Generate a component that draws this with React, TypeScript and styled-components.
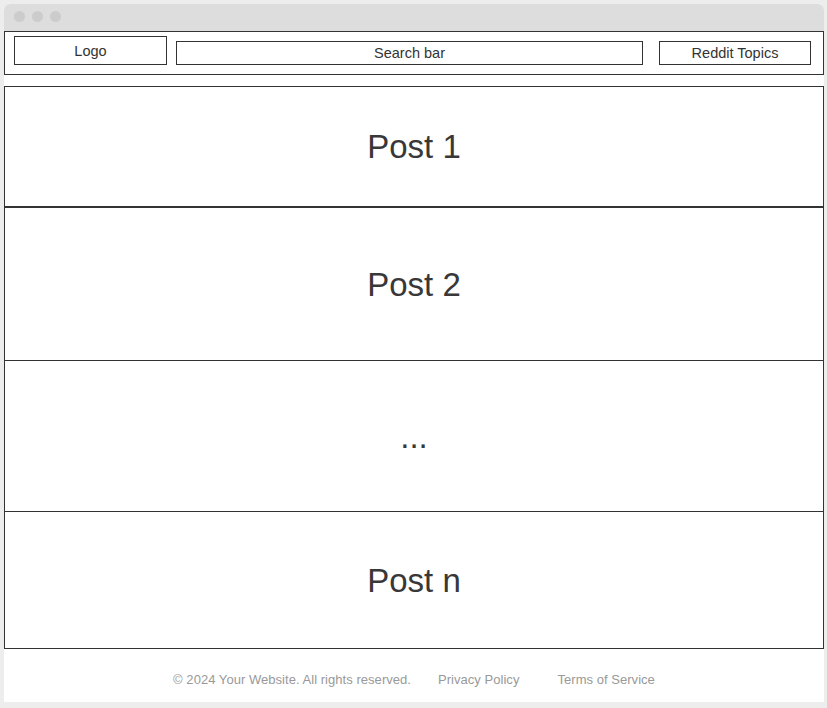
import React from "react";
import styled, { createGlobalStyle } from "styled-components";

const Global = createGlobalStyle`
  html, body { margin: 0; padding: 0; background: #ededed; }
  body { font-family: "Liberation Sans", Arial, sans-serif; color: #333; }
`;

const Page = styled.div`
  padding: 4px 3px 6px 4px;
`;

const Window = styled.div`
  width: 820px;
  height: 698px;
  background: #fff;
  border-radius: 6px 6px 0 0;
  display: flex;
  flex-direction: column;
  box-sizing: border-box;
`;

const TitleBar = styled.div`
  height: 27px;
  background: #dddddd;
  border-radius: 6px 6px 0 0;
  display: flex;
  align-items: center;
  gap: 7px;
  padding: 0 0 2px 10px;
  box-sizing: border-box;
`;

const Dot = styled.span`
  width: 11px;
  height: 11px;
  border-radius: 50%;
  background: #cccccc;
`;

const Header = styled.header`
  height: 44px;
  border: 1px solid #333;
  box-sizing: border-box;
  display: flex;
  align-items: flex-start;
  padding: 0 12px 0 9px;
`;

const HeaderBox = styled.div<{ $w: number; $h: number; $top: number; $gap: number }>`
  width: ${(p) => p.$w}px;
  height: ${(p) => p.$h}px;
  margin-top: ${(p) => p.$top}px;
  margin-right: ${(p) => p.$gap}px;
  border: 1px solid #333;
  box-sizing: border-box;
  display: flex;
  align-items: center;
  justify-content: center;
  font-size: 14.5px;
  color: #333;
`;

const Posts = styled.main`
  margin-top: 11px;
  display: flex;
  flex-direction: column;
`;

const Post = styled.section<{ $h: number; $top: boolean }>`
  height: ${(p) => p.$h}px;
  border: 1px solid #333;
  border-top: ${(p) => (p.$top ? "1px solid #333" : "none")};
  box-sizing: border-box;
  display: flex;
  align-items: center;
  justify-content: center;
  padding-top: 1px;
  font-size: 33px;
  color: #383838;
`;

const Footer = styled.footer`
  flex: 1;
  display: flex;
  align-items: center;
  justify-content: center;
  padding-top: 8px;
  font-size: 13px;
  letter-spacing: 0.04px;
  color: #999;
`;

const FooterItem = styled.span<{ $gap: number }>`
  margin-right: ${(p) => p.$gap}px;
`;

const posts = [
  { label: "Post 1", h: 121, top: true },
  { label: "Post 2", h: 154, top: true },
  { label: "...", h: 151, top: false },
  { label: "Post n", h: 137, top: false },
];

export default function App() {
  return (
    <>
      <Global />
      <Page>
        <Window>
          <TitleBar>
            <Dot />
            <Dot />
            <Dot />
          </TitleBar>
          <Header>
            <HeaderBox $w={153} $h={29} $top={4} $gap={9}>Logo</HeaderBox>
            <HeaderBox $w={467} $h={24} $top={9} $gap={16}>Search bar</HeaderBox>
            <HeaderBox $w={152} $h={24} $top={9} $gap={0}>Reddit Topics</HeaderBox>
          </Header>
          <Posts>
            {posts.map((p) => (
              <Post key={p.label} $h={p.h} $top={p.top}>
                {p.label}
              </Post>
            ))}
          </Posts>
          <Footer>
            <FooterItem $gap={27}>© 2024 Your Website. All rights reserved.</FooterItem>
            <FooterItem $gap={38}>Privacy Policy</FooterItem>
            <FooterItem $gap={0}>Terms of Service</FooterItem>
          </Footer>
        </Window>
      </Page>
    </>
  );
}
